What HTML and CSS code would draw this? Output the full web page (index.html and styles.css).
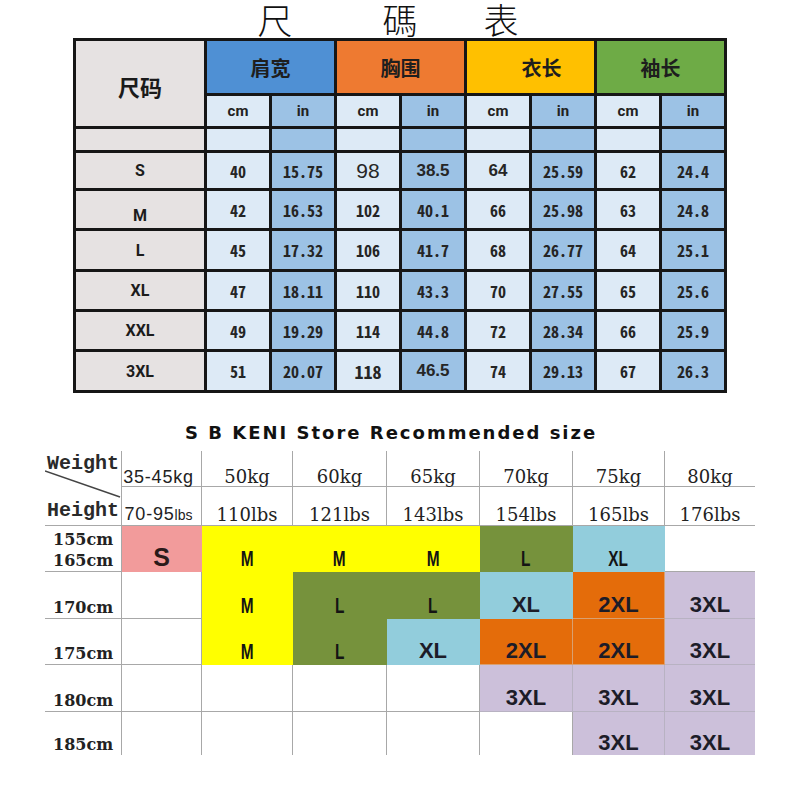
FILE: index.html
```html
<!DOCTYPE html>
<html lang="zh">
<head>
<meta charset="utf-8">
<title>尺碼表</title>
<link rel="stylesheet" href="styles.css">
</head>
<body>
<div class="page">
  <h1 class="title"><span class="t1">尺</span><span class="t2">碼</span><span class="t3">表</span></h1>

  <table class="spec">
    <colgroup>
      <col class="c-size"><col class="c-sub"><col class="c-sub"><col class="c-sub"><col class="c-sub"><col class="c-sub"><col class="c-sub"><col class="c-sub"><col class="c-sub">
    </colgroup>
    <tr class="r-head">
      <th rowspan="2" class="size-head">尺码</th>
      <th colspan="2" class="grp h-blue">肩宽</th>
      <th colspan="2" class="grp h-orange">胸围</th>
      <th colspan="2" class="grp h-amber"><span class="shift">衣长</span></th>
      <th colspan="2" class="grp h-green">袖长</th>
    </tr>
    <tr class="r-unit">
      <td class="lt unit">cm</td><td class="dk unit">in</td>
      <td class="lt unit">cm</td><td class="dk unit">in</td>
      <td class="lt unit">cm</td><td class="dk unit">in</td>
      <td class="lt unit">cm</td><td class="dk unit">in</td>
    </tr>
    <tr class="r-empty">
      <td class="sz"></td>
      <td class="lt"></td><td class="dk"></td><td class="lt"></td><td class="dk"></td>
      <td class="lt"></td><td class="dk"></td><td class="lt"></td><td class="dk"></td>
    </tr>
    <tr class="r-s">
      <td class="sz">S</td>
      <td class="lt num">40</td><td class="dk num">15.75</td>
      <td class="lt sans big">98</td><td class="dk sans">38.5</td>
      <td class="lt sans">64</td><td class="dk num">25.59</td>
      <td class="lt num">62</td><td class="dk num">24.4</td>
    </tr>
    <tr class="r-m">
      <td class="sz low">M</td>
      <td class="lt num">42</td><td class="dk num">16.53</td>
      <td class="lt num">102</td><td class="dk num">40.1</td>
      <td class="lt num">66</td><td class="dk num">25.98</td>
      <td class="lt num">63</td><td class="dk num">24.8</td>
    </tr>
    <tr class="r-l">
      <td class="sz">L</td>
      <td class="lt num">45</td><td class="dk num">17.32</td>
      <td class="lt num">106</td><td class="dk num">41.7</td>
      <td class="lt num">68</td><td class="dk num">26.77</td>
      <td class="lt num">64</td><td class="dk num">25.1</td>
    </tr>
    <tr class="r-xl">
      <td class="sz">XL</td>
      <td class="lt num">47</td><td class="dk num">18.11</td>
      <td class="lt num">110</td><td class="dk num">43.3</td>
      <td class="lt num">70</td><td class="dk num">27.55</td>
      <td class="lt num">65</td><td class="dk num">25.6</td>
    </tr>
    <tr class="r-xxl">
      <td class="sz">XXL</td>
      <td class="lt num">49</td><td class="dk num">19.29</td>
      <td class="lt num">114</td><td class="dk num">44.8</td>
      <td class="lt num">72</td><td class="dk num">28.34</td>
      <td class="lt num">66</td><td class="dk num">25.9</td>
    </tr>
    <tr class="r-3xl">
      <td class="sz">3XL</td>
      <td class="lt num">51</td><td class="dk num">20.07</td>
      <td class="lt num num-lg">118</td><td class="dk sans">46.5</td>
      <td class="lt num">74</td><td class="dk num">29.13</td>
      <td class="lt num">67</td><td class="dk num">26.3</td>
    </tr>
  </table>

  <h2 class="rec-title">S B KENI Store Recommended size</h2>

  <div class="rec">
    <div class="g lab-head">
      <svg class="diag" width="77" height="75" viewBox="0 0 77 75"><line x1="0" y1="20" x2="75" y2="46" stroke="#444" stroke-width="1.4"/></svg>
      <span class="wh w">Weight</span>
      <span class="wh h">Height</span>
    </div>
    <div class="g hd"><span class="kg-sans">35-45kg</span></div>
    <div class="g hd">50kg</div>
    <div class="g hd">60kg</div>
    <div class="g hd">65kg</div>
    <div class="g hd">70kg</div>
    <div class="g hd">75kg</div>
    <div class="g hd last">80kg</div>

    <div class="g hd hd2"><span class="kg-sans">70-95<small>lbs</small></span></div>
    <div class="g hd hd2">110lbs</div>
    <div class="g hd hd2">121lbs</div>
    <div class="g hd hd2">143lbs</div>
    <div class="g hd hd2">154lbs</div>
    <div class="g hd hd2">165lbs</div>
    <div class="g hd hd2 last">176lbs</div>

    <div class="g lab two"><span>155cm</span><span>165cm</span></div>
    <div class="g pink"><span class="big-s">S</span></div>
    <div class="g yellow"><span class="nar">M</span></div>
    <div class="g yellow"><span class="nar">M</span></div>
    <div class="g yellow"><span class="nar">M</span></div>
    <div class="g green"><span class="nar">L</span></div>
    <div class="g blue"><span class="nar">XL</span></div>
    <div class="g last"></div>

    <div class="g lab">170cm</div>
    <div class="g"></div>
    <div class="g yellow"><span class="nar">M</span></div>
    <div class="g green"><span class="nar">L</span></div>
    <div class="g green"><span class="nar">L</span></div>
    <div class="g blue"><span class="wide">XL</span></div>
    <div class="g orange"><span class="wide">2XL</span></div>
    <div class="g lav last"><span class="wide">3XL</span></div>

    <div class="g lab">175cm</div>
    <div class="g"></div>
    <div class="g yellow"><span class="nar">M</span></div>
    <div class="g green"><span class="nar">L</span></div>
    <div class="g blue"><span class="wide">XL</span></div>
    <div class="g orange"><span class="wide">2XL</span></div>
    <div class="g orange"><span class="wide">2XL</span></div>
    <div class="g lav last"><span class="wide">3XL</span></div>

    <div class="g lab">180cm</div>
    <div class="g"></div>
    <div class="g"></div>
    <div class="g"></div>
    <div class="g"></div>
    <div class="g lav"><span class="wide">3XL</span></div>
    <div class="g lav"><span class="wide">3XL</span></div>
    <div class="g lav last"><span class="wide">3XL</span></div>

    <div class="g lab bot">185cm</div>
    <div class="g bot"></div>
    <div class="g bot"></div>
    <div class="g bot"></div>
    <div class="g bot"></div>
    <div class="g bot"></div>
    <div class="g lav bot"><span class="wide">3XL</span></div>
    <div class="g lav bot last"><span class="wide">3XL</span></div>
  </div>
</div>
</body>
</html>
```

FILE: styles.css
```css
* { box-sizing: border-box; }
html, body { margin: 0; padding: 0; background: #fff; }
body {
  width: 800px;
  height: 800px;
  overflow: hidden;
  font-family: "Liberation Sans", Arial, sans-serif;
  color: #1b1b1b;
}

/* ---------- title ---------- */
.title {
  margin: 0;
  height: 38px;
  display: flex;
  align-items: center;
  padding-left: 253px;
  font: 300 35px/38px "Noto Sans CJK SC", "Noto Sans CJK JP", sans-serif;
  color: #111;
}
.title span { width: 44px; text-align: center; }
.t2 { margin-left: 81px; }
.t3 { margin-left: 57px; }

/* ---------- size spec table ---------- */
.spec {
  border-collapse: collapse;
  table-layout: fixed;
  width: 654px;
  margin-left: 73px;
  border: 3px solid #161616;
}
.c-size { width: 131px; }
.c-sub { width: 65px; }
.spec th, .spec td {
  border: 3px solid #161616;
  padding: 0;
  text-align: center;
  vertical-align: middle;
}
.r-head { height: 55px; }
.r-unit { height: 33px; }
.r-empty { height: 24px; }
.r-s { height: 38px; }
.r-m { height: 40px; }
.r-l { height: 41px; }
.r-xl { height: 40px; }
.r-xxl { height: 40px; }
.r-3xl { height: 41px; }

.size-head {
  background: #e6e2e2;
  font: bold 22px "Noto Sans CJK SC", sans-serif;
  color: #1a1a1a;
  padding-top: 4px !important;
}
.grp {
  font: bold 20px "Noto Sans CJK SC", sans-serif;
  color: #1e1e1e;
}
.h-blue { background: #4f90d4; }
.h-orange { background: #ee7a31; }
.h-amber { background: #ffc000; }
.h-green { background: #6eab46; }
.shift { display: inline-block; margin-left: 22px; }

.lt { background: #ddeaf6; }
.dk { background: #9cc2e5; }
.unit {
  font: bold 15px "Roboto", "Liberation Sans", sans-serif;
  color: #222;
}
.sz {
  background: #e6e2e2;
  font: bold 16px "Roboto", "Liberation Sans", sans-serif;
  color: #1c1c1c;
}
.sz.low { padding-top: 12px !important; }
.num {
  font: bold 16px "Noto Sans Mono CJK SC", "Liberation Mono", monospace;
  color: #252525;
}
.num-lg { font-size: 18px; }
.sans {
  font: bold 17px "Liberation Sans", Arial, sans-serif;
  color: #262626;
}
.big { font-size: 21px; font-weight: normal; }

/* ---------- recommended size ---------- */
.rec-title {
  margin: 28px 0 0;
  height: 24px;
  padding-left: 185px;
  font: bold 18px/24px "DejaVu Sans", sans-serif;
  letter-spacing: 2px;
  color: #111;
}

.rec {
  margin: 6px 0 0 45px;
  display: grid;
  grid-template-columns: 77px 80px 91px 94px 93px 93px 92px 90px;
  grid-template-rows: 36px 39px 46px 47px 46px 47px 43px;
}
.g {
  border-right: 1px solid #a8a8a8;
  border-bottom: 1px solid #a8a8a8;
  display: flex;
  align-items: flex-end;
  justify-content: center;
  padding-bottom: 1px;
}
.g.last { border-right: none; }
.g.bot { border-bottom: none; padding-bottom: 0; }

.lab-head {
  grid-row: span 2;
  position: relative;
  flex-direction: column;
  align-items: flex-start;
  justify-content: space-between;
  padding: 0 0 3px 2px;
}
.diag { position: absolute; left: 0; top: 0; }
.wh {
  font: bold 20px/22px "Liberation Mono", monospace;
  color: #2a2a2a;
}
.wh.w { margin-top: 2px; }

.hd {
  font: 18px/18px "DejaVu Serif", serif;
  color: #222;
  padding-bottom: 0;
}
.hd2 { line-height: 20px; padding-bottom: 0; }
.kg-sans {
  font: 18px/18px "Liberation Sans", Arial, sans-serif;
  letter-spacing: 0.8px;
  margin-left: -6px;
}
.hd2 .kg-sans { line-height: 20px; }
.kg-sans small { font-size: 14px; letter-spacing: 0; }

.lab {
  justify-content: flex-start;
  padding-left: 8px;
  font: bold 16px/20px "DejaVu Serif", serif;
  color: #222;
  padding-bottom: 0;
}
.lab.two { flex-direction: column; justify-content: center; align-items: flex-start; padding-top: 2px; line-height: 21px; }

.pink { background: #f29b9b; border-color: #f29b9b; }
.yellow { background: #ffff00; border-color: #ffff00; }
.green { background: #76923c; border-color: #76923c; }
.blue { background: #92cddc; border-color: #92cddc; }
.orange { background: #e46c0a; border-color: #d9a070; }
.lav { background: #ccc0da; border-color: #b8b2c2; }

.nar {
  display: inline-block;
  font: bold 22px/22px "Liberation Sans", Arial, sans-serif;
  transform: scaleX(0.7);
  color: #141414;
}
.wide {
  font: bold 22px/24px "Liberation Sans", Arial, sans-serif;
  color: #1c1c28;
}
.big-s {
  font: bold 25px/26px "Liberation Sans", Arial, sans-serif;
  color: #2a1a1a;
}
```
